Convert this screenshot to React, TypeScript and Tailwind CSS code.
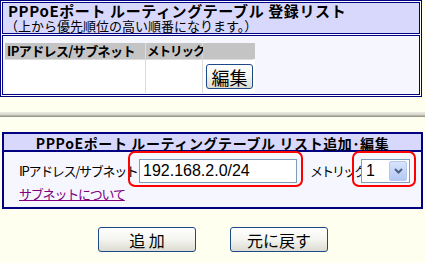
import React, { useState } from 'react';

const jp = { fontFamily: '"MS PGothic", "Noto Sans CJK JP", sans-serif' };
const latin = { fontFamily: '"Liberation Sans", Arial, sans-serif' };

const XpButton: React.FC<{ label: string; className?: string }> = ({ label, className }) => (
  <button
    type="button"
    className={`flex items-center justify-center rounded-[3px] border border-[#1c4a86] bg-gradient-to-b from-[#ffffff] via-[#f4f4f0] to-[#dcdcd2] text-black ${className ?? ''}`}
  >
    {label}
  </button>
);

export default function App() {
  const [address, setAddress] = useState('192.168.2.0/24');
  const [metric, setMetric] = useState('1');

  return (
    <div className="w-[425px] h-[263px] overflow-hidden bg-[#fffff0] text-black" style={jp}>
      {/* registered list */}
      <div className="w-[422px] border border-[#000080] bg-white p-px">
        <div className="h-[32px] border border-[#000080] bg-[#d8d8fc] pl-[5px]">
          <div className="whitespace-nowrap text-[15px] font-bold leading-[16px] tracking-[0.6px]">PPPoEポート ルーティングテーブル 登録リスト</div>
          <div className="-ml-[3px] whitespace-nowrap text-[13px] leading-[14px]">（上から優先順位の高い順番になります。）</div>
        </div>
        <div className="mt-px h-[60px] border border-[#000080] bg-[#f6f6ff] pl-[2px] pt-[7px]">
          <div className="grid w-[248px] grid-cols-[140px_56px_52px] bg-[#dcdcdc] gap-px">
            <div className="h-[16px] whitespace-nowrap bg-[#c4c4c4] pl-[2px] text-[13px] font-bold leading-[16px] tracking-[-0.6px]">IPアドレス/サブネット</div>
            <div className="h-[16px] whitespace-nowrap bg-[#c4c4c4] pl-[1px] text-[12.5px] font-bold leading-[16px] tracking-[-1px]">メトリック</div>
            <div className="h-[16px] bg-[#c4c4c4]" />
            <div className="h-[33px] bg-white" />
            <div className="h-[33px] bg-white" />
            <div className="flex h-[33px] items-center bg-white pl-[3px]">
              <XpButton label="編集" className="h-[25px] w-[47px] text-[18px] leading-none" />
            </div>
          </div>
        </div>
      </div>

      {/* separator rule */}
      <div className="mt-[15px] h-[5px] w-full bg-gradient-to-b from-[#ecece4] via-[#d6d6cc] to-[#8c887c]" />

      {/* add / edit form */}
      <div className="ml-[2px] mt-[15px] w-[421px] border-2 border-[#000080] bg-[#f6f6ff]">
        <div className="h-[18px] whitespace-nowrap border-b-2 border-[#000080] bg-[#d8d8fc] text-center text-[14px] font-bold leading-[18px] tracking-[0.6px]">
          PPPoEポート ルーティングテーブル リスト追加･編集
        </div>
        <div className="relative h-[55px] pl-[15px] pt-[7px]">
          <div className="flex h-[24px] items-center">
            <span className="w-[120px] whitespace-nowrap text-[13px] tracking-[-1.3px]">IPアドレス/サブネット</span>
            <input
              value={address}
              onChange={(e) => setAddress(e.target.value)}
              className="h-[24px] w-[158px] border border-[#7f9db9] bg-white pl-[3px] text-[16px] outline-none"
              style={latin}
            />
            <span className="ml-[13px] w-[51px] whitespace-nowrap text-[13px] tracking-[-2px]">メトリック</span>
            <div className="flex h-[24px] w-[49px] items-center border border-[#7f9db9] bg-white pl-[4px]">
              <span className="flex-1 text-[16px]" style={latin}>{metric}</span>
              <button
                type="button"
                onClick={() => setMetric(metric === '1' ? '2' : '1')}
                className="mr-[2px] flex h-[20px] w-[18px] items-center justify-center rounded-[2px] border border-[#b4c8f4] bg-gradient-to-b from-[#d8e4fc] to-[#b4c8f4]"
              >
                <svg width="9" height="6" viewBox="0 0 9 6">
                  <path d="M1 1 L4.5 4.5 L8 1" stroke="#4d6185" strokeWidth="2" fill="none" />
                </svg>
              </button>
            </div>
          </div>
          <a href="#" className="mt-[3px] block w-fit whitespace-nowrap text-[13px] leading-[15px] tracking-[-1.2px] text-[#800080] underline">
            サブネットについて
          </a>
          {/* red highlight marks */}
          <div className="absolute left-[124px] top-[-1px] h-[36px] w-[175px] rounded-[7px] border-2 border-[#ff0000]" />
          <div className="absolute left-[348px] top-[-1px] h-[36px] w-[64px] rounded-[7px] border-2 border-[#ff0000]" />
        </div>
      </div>

      {/* actions */}
      <div className="mt-[18px] flex">
        <XpButton label="追 加" className="ml-[98px] h-[25px] w-[98px] text-[16px]" />
        <XpButton label="元に戻す" className="ml-[34px] h-[25px] w-[98px] text-[16px]" />
      </div>
    </div>
  );
}
